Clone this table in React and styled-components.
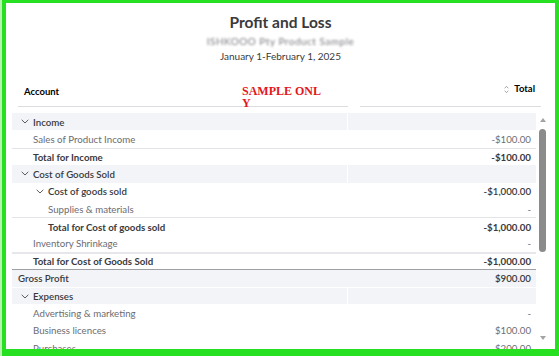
import styled, { createGlobalStyle } from 'styled-components';

const GlobalStyle = createGlobalStyle`
  html, body {
    margin: 0;
    padding: 0;
    background: #26e021;
  }
  * {
    box-sizing: border-box;
  }
`;

const Frame = styled.div`
  width: 559px;
  height: 356px;
  padding: 3px 4px 7px 4px;
  border-left: 2px solid #b8f2b0;
  background: #26e021;
`;

const Panel = styled.div`
  position: relative;
  height: 100%;
  background: #ffffff;
  display: flex;
  flex-direction: column;
  font-family: 'Lato', 'Liberation Sans', sans-serif;
  color: #393a3d;
  overflow: hidden;
`;

const Head = styled.div`
  display: flex;
  flex-direction: column;
  align-items: center;
  padding-top: 9px;
`;

const Title = styled.h1`
  margin: 0;
  font-size: 15.5px;
  line-height: 20px;
  font-weight: 700;
`;

const Company = styled.div`
  margin-top: 3px;
  height: 12px;
  font-size: 10px;
  line-height: 12px;
  color: #7a7b80;
  filter: blur(1.1px);
  letter-spacing: 0.5px;
`;

const DateLine = styled.div`
  margin-top: 3px;
  font-size: 10px;
  line-height: 12px;
`;

const HeaderRow = styled.div`
  position: relative;
  display: flex;
  align-items: flex-end;
  gap: 12px;
  height: 45px;
  padding-left: 12px;
`;

const HeaderCell = styled.div`
  width: ${({ width }) => width}px;
  display: flex;
  align-items: center;
  justify-content: ${({ right }) => (right ? 'flex-end' : 'flex-start')};
  gap: 5px;
  padding: 0 6px ${({ lift }) => lift}px;
  border-bottom: 1px solid #dcdde1;
  font-size: 9.5px;
  line-height: 12px;
  font-weight: 700;
  color: #000;
`;

const Watermark = styled.div`
  position: absolute;
  left: 236px;
  top: 23px;
  font-family: 'Liberation Serif', serif;
  font-weight: 700;
  font-size: 12px;
  line-height: 12px;
  color: #e3161d;
`;

const Body = styled.div`
  flex: 1;
  display: flex;
  margin-top: 6px;
  padding: 0 6px 0 6px;
  min-height: 0;
`;

const Table = styled.div`
  flex: 1;
  overflow: hidden;
`;

const Row = styled.div`
  display: grid;
  grid-template-columns: 335px 1fr;
  height: 17.4px;
  font-size: 9.7px;
  background: ${({ shaded }) => (shaded ? '#f3f4f7' : '#ffffff')};
  border-top: ${({ topLine }) => topLine || 'none'};
  border-bottom: ${({ bottomLine }) => bottomLine || 'none'};
  color: ${({ muted }) => (muted ? '#6b6c72' : '#393a3d')};
  font-weight: ${({ weight }) => weight};
`;

const Label = styled.div`
  display: flex;
  align-items: center;
  padding-left: ${({ indent }) => indent}px;
  white-space: nowrap;
`;

const Value = styled.div`
  display: flex;
  align-items: center;
  justify-content: flex-end;
  padding-right: 5px;
  border-left: ${({ divider }) => (divider ? '1px solid #ffffff' : 'none')};
`;

const Chevron = styled.span`
  display: inline-flex;
  width: 12px;
  margin-left: -12px;
  color: #4a4b50;
`;

const Scrollbar = styled.div`
  width: 13px;
  display: flex;
  flex-direction: column;
  align-items: center;
  padding-top: 5px;
`;

const Arrow = styled.div`
  width: 0;
  height: 0;
  border-left: 3.5px solid transparent;
  border-right: 3.5px solid transparent;
  ${({ down }) =>
    down
      ? 'border-top: 4px solid #a3a3a3; margin-top: auto; margin-bottom: 9px;'
      : 'border-bottom: 4px solid #a3a3a3;'}
`;

const Thumb = styled.div`
  width: 6.5px;
  height: 123px;
  margin-top: 7px;
  border-radius: 3.5px;
  background: #8b8b8b;
`;

const ChevronIcon = () => (
  <svg width="8" height="5" viewBox="0 0 8 5" fill="none">
    <path d="M0.7 0.8 L4 4 L7.3 0.8" stroke="currentColor" strokeWidth="0.9" />
  </svg>
);

const SortIcon = () => (
  <svg width="5" height="9" viewBox="0 0 5 9" fill="none">
    <path d="M0.7 3.3 L2.5 1.3 L4.3 3.3 M0.7 5.7 L2.5 7.7 L4.3 5.7" stroke="#8d9096" strokeWidth="0.8" />
  </svg>
);

const light = '1px solid #e3e4e8';

const rows = [
  { kind: 'section', level: 1, label: 'Income' },
  { kind: 'item', level: 1, label: 'Sales of Product Income', value: '-$100.00' },
  { kind: 'total', level: 1, label: 'Total for Income', value: '-$100.00', topLine: light },
  { kind: 'section', level: 1, label: 'Cost of Goods Sold' },
  { kind: 'sub', level: 2, label: 'Cost of goods sold', value: '-$1,000.00' },
  { kind: 'item', level: 2, label: 'Supplies & materials', value: '-' },
  { kind: 'total', level: 2, label: 'Total for Cost of goods sold', value: '-$1,000.00', topLine: light },
  { kind: 'item', level: 1, label: 'Inventory Shrinkage', value: '-' },
  {
    kind: 'total',
    level: 1,
    label: 'Total for Cost of Goods Sold',
    value: '-$1,000.00',
    topLine: '2px solid #e6e7ea',
    bottomLine: '1px solid #9fa0a5',
  },
  { kind: 'gross', level: 0, label: 'Gross Profit', value: '$900.00' },
  { kind: 'section', level: 1, label: 'Expenses', topLine: '1px solid #ffffff' },
  { kind: 'item', level: 1, label: 'Advertising & marketing', value: '-' },
  { kind: 'item', level: 1, label: 'Business licences', value: '$100.00' },
  { kind: 'item', level: 1, label: 'Purchases', value: '$200.00' },
];

const weights = { section: 600, sub: 600, total: 700, gross: 600, item: 400 };

const ReportRow = ({ row }) => {
  const shaded = row.kind === 'section' || row.kind === 'gross';
  const hasChevron = row.kind === 'section' || row.kind === 'sub';
  return (
    <Row
      shaded={shaded}
      muted={row.kind === 'item'}
      weight={weights[row.kind]}
      topLine={row.topLine}
      bottomLine={row.bottomLine}
    >
      <Label indent={Math.round(6 + row.level * 14.8)}>
        {hasChevron && (
          <Chevron>
            <ChevronIcon />
          </Chevron>
        )}
        {row.label}
      </Label>
      <Value divider={row.kind === 'section'}>{row.value}</Value>
    </Row>
  );
};

export default function App() {
  return (
    <>
      <GlobalStyle />
      <Frame>
        <Panel>
          <Head>
            <Title>Profit and Loss</Title>
            <Company>ISHKOOO Pty Product Sample</Company>
            <DateLine>January 1-February 1, 2025</DateLine>
          </Head>
          <HeaderRow>
            <HeaderCell width={330} lift={8}>Account</HeaderCell>
            <HeaderCell width={181} lift={11} right>
              <SortIcon />
              Total
            </HeaderCell>
            <Watermark>
              SAMPLE ONL
              <br />Y
            </Watermark>
          </HeaderRow>
          <Body>
            <Table>
              {rows.map((row) => (
                <ReportRow key={row.label} row={row} />
              ))}
            </Table>
            <Scrollbar>
              <Arrow />
              <Thumb />
              <Arrow down />
            </Scrollbar>
          </Body>
        </Panel>
      </Frame>
    </>
  );
}
